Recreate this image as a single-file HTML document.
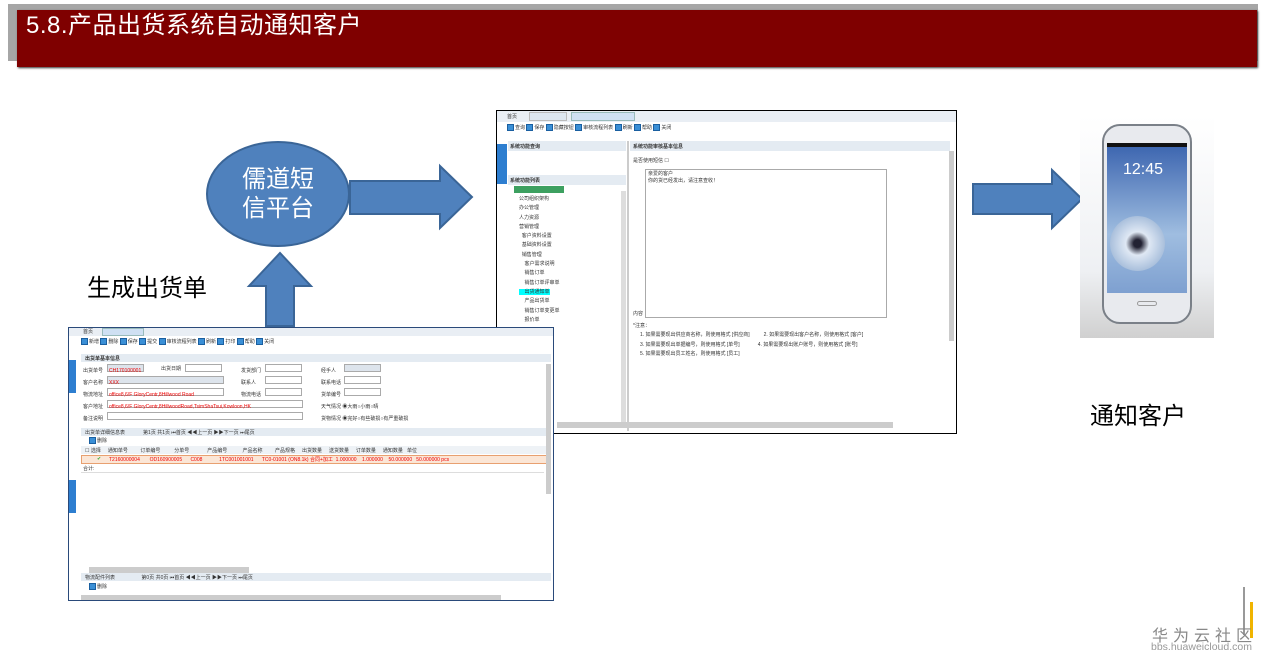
<!DOCTYPE html>
<html><head><meta charset="utf-8"><style>
*{margin:0;padding:0;box-sizing:border-box}
body{width:1273px;height:663px;background:#fff;position:relative;overflow:hidden;font-family:"Liberation Sans","Noto Sans CJK SC",sans-serif}
.a{position:absolute}
.t{font-size:5px;color:#333;white-space:nowrap}
.btn{display:inline-block;width:7px;height:7px;background:#3a8fd6;border:1px solid #1a5fa0;vertical-align:middle;margin-right:1px}
</style></head><body>
<div class="a" style="left:8px;top:4px;width:1250px;height:57px;background:#a6a6a6"></div>
<div class="a" style="left:17px;top:10px;width:1240px;height:57px;background:#7f0000;box-shadow:1px 1px 2px #333"></div>
<div class="a" style="left:26px;top:10px;color:#fff;font-size:24px;line-height:32px;letter-spacing:0.5px">5.8.产品出货系统自动通知客户</div>

<svg class="a" style="left:0;top:0" width="1273" height="663">
<ellipse cx="278" cy="194" rx="71" ry="52" fill="#4f81bd" stroke="#3a6597" stroke-width="2"/>
<polygon points="350,181 440,181 440,166 472,197 440,228 440,214 350,214" fill="#4f81bd" stroke="#3a6597" stroke-width="2"/>
<polygon points="973,184 1052,184 1052,170 1082,199 1052,228 1052,214 973,214" fill="#4f81bd" stroke="#3a6597" stroke-width="2"/>
<polygon points="266,326 266,286 249,286 280,253 311,286 294,286 294,326" fill="#4f81bd" stroke="#3a6597" stroke-width="2"/>
</svg>
<div class="a" style="left:207px;top:165px;width:142px;text-align:center;color:#fff;font-size:24px;line-height:29px">儒道短<br>信平台</div>
<div class="a" style="left:87px;top:268px;font-size:24px;color:#000">生成出货单</div>
<div class="a" style="left:1090px;top:396px;font-size:24px;color:#000">通知客户</div>

<div class="a" style="left:496px;top:110px;width:461px;height:324px;border:1px solid #000;background:#fff;overflow:hidden">
 <div class="a" style="left:0;top:0;width:459px;height:11px;background:#e9eef4"></div>
 <div class="a t" style="left:10px;top:2px">首页</div>
 <div class="a" style="left:32px;top:1px;width:38px;height:9px;background:#dde6ef;border:1px solid #bbb"></div>
 <div class="a" style="left:74px;top:1px;width:64px;height:9px;background:#cfe0f3;border:1px solid #9bb"></div>
 <div class="a t" style="left:10px;top:13px"><span class="btn"></span>查询 <span class="btn"></span>保存 <span class="btn"></span>隐藏按钮 <span class="btn"></span>审核流程列表 <span class="btn"></span>刷新 <span class="btn"></span>帮助 <span class="btn"></span>关闭</div>
 <div class="a" style="left:0;top:33px;width:10px;height:40px;background:#2d7ed0"></div>
 <div class="a" style="left:11px;top:30px;width:118px;height:10px;background:#e4ebf2"></div>
 <div class="a t" style="left:13px;top:32px;font-weight:bold">系统功能查询</div>
 <div class="a" style="left:11px;top:64px;width:118px;height:10px;background:#e4ebf2"></div>
 <div class="a t" style="left:13px;top:66px;font-weight:bold">系统功能列表</div>
 <div class="a" style="left:17px;top:75px;width:50px;height:7px;background:#3da060"></div>
 <div class="a t" style="left:22px;top:84px;line-height:9.3px">公司组织架构<br>办公管理<br>人力资源<br>营销管理<br>&nbsp;&nbsp;客户资料设置<br>&nbsp;&nbsp;基础资料设置<br>&nbsp;&nbsp;销售管理<br>&nbsp;&nbsp;&nbsp;&nbsp;客户需求说明<br>&nbsp;&nbsp;&nbsp;&nbsp;销售订单<br>&nbsp;&nbsp;&nbsp;&nbsp;销售订单评审单<br><span style="background:#0ff">&nbsp;&nbsp;&nbsp;&nbsp;出货通知单</span><br>&nbsp;&nbsp;&nbsp;&nbsp;产品出货单<br>&nbsp;&nbsp;&nbsp;&nbsp;销售订单变更单<br>&nbsp;&nbsp;&nbsp;&nbsp;报价单</div>
 <div class="a" style="left:124px;top:80px;width:5px;height:232px;background:#ddd"></div>
 <div class="a" style="left:130px;top:30px;width:2px;height:290px;background:#ccc"></div>
 <div class="a" style="left:133px;top:30px;width:320px;height:10px;background:#e4ebf2"></div>
 <div class="a t" style="left:136px;top:32px;font-weight:bold">系统功能审核基本信息</div>
 <div class="a t" style="left:136px;top:46px">是否使用短信 ☐</div>
 <div class="a" style="left:148px;top:58px;width:242px;height:149px;border:1px solid #aaa"></div>
 <div class="a t" style="left:151px;top:59px">亲爱的客户<br>你的货已经发出，请注意查收！</div>
 <div class="a t" style="left:136px;top:199px">内容</div>
 <div class="a t" style="left:136px;top:211px;line-height:9.3px">*注意：<br>&nbsp;&nbsp;&nbsp;&nbsp;&nbsp;1. 如果需要现出供应商名称，则使用格式 [供应商]&nbsp;&nbsp;&nbsp;&nbsp;&nbsp;&nbsp;&nbsp;&nbsp;&nbsp;&nbsp;2. 如果需要现出客户名称，则使用格式 [客户]<br>&nbsp;&nbsp;&nbsp;&nbsp;&nbsp;3. 如果需要现出单据编号，则使用格式 [单号]&nbsp;&nbsp;&nbsp;&nbsp;&nbsp;&nbsp;&nbsp;&nbsp;&nbsp;&nbsp;&nbsp;&nbsp;&nbsp;4. 如果需要现出账户账号，则使用格式 [账号]<br>&nbsp;&nbsp;&nbsp;&nbsp;&nbsp;5. 如果需要现出员工姓名，则使用格式 [员工]</div>
 <div class="a" style="left:452px;top:40px;width:5px;height:190px;background:#ccc"></div>
 <div class="a" style="left:60px;top:311px;width:336px;height:6px;background:#ccc"></div>
</div>

<div class="a" style="left:68px;top:327px;width:486px;height:274px;border:1px solid #2a4a7a;background:#fff;overflow:hidden">
 <div class="a" style="left:0;top:0;width:484px;height:8px;background:#e9eef4"></div>
 <div class="a t" style="left:14px;top:0px">首页</div>
 <div class="a" style="left:33px;top:0;width:42px;height:8px;background:#cfe0f3;border:1px solid #9bb"></div>
 <div class="a t" style="left:12px;top:10px"><span class="btn"></span>新增 <span class="btn"></span>删除 <span class="btn"></span>保存 <span class="btn"></span>提交 <span class="btn"></span>审核流程列表 <span class="btn"></span>刷新 <span class="btn"></span>打印 <span class="btn"></span>帮助 <span class="btn"></span>关闭</div>
 <div class="a" style="left:0;top:32px;width:7px;height:33px;background:#2d7ed0"></div>
 <div class="a" style="left:0;top:152px;width:7px;height:33px;background:#2d7ed0"></div>
 <div class="a" style="left:12px;top:26px;width:470px;height:8px;background:#e4ebf2"></div>
 <div class="a t" style="left:16px;top:27px;font-weight:bold">出货单基本信息</div>
 <div class="a t" style="left:14px;top:37px;line-height:12px">出货单号<br>客户名称<br>物流地址<br>客户地址<br>备注说明</div>
 <div class="a t" style="left:92px;top:37px">出货日期</div>
 <div class="a t" style="left:172px;top:37px;line-height:12px">发货部门<br>联系人<br>物流电话</div>
 <div class="a t" style="left:252px;top:37px;line-height:12px">经手人<br>联系电话<br>货单编号<br>天气情况 ◉大雨○小雨○晴<br>货物情况 ◉完好○有些破损○有严重破损</div>
 <div class="a" style="left:38px;top:36px;width:37px;height:8px;background:#dde4ec;border:1px solid #aaa"></div>
 <div class="a" style="left:116px;top:36px;width:37px;height:8px;border:1px solid #aaa"></div>
 <div class="a" style="left:196px;top:36px;width:37px;height:8px;border:1px solid #aaa"></div>
 <div class="a" style="left:275px;top:36px;width:37px;height:8px;background:#dde4ec;border:1px solid #aaa"></div>
 <div class="a" style="left:38px;top:48px;width:117px;height:8px;background:#dde4ec;border:1px solid #aaa"></div>
 <div class="a" style="left:196px;top:48px;width:37px;height:8px;border:1px solid #aaa"></div>
 <div class="a" style="left:275px;top:48px;width:37px;height:8px;border:1px solid #aaa"></div>
 <div class="a" style="left:38px;top:60px;width:117px;height:8px;border:1px solid #aaa"></div>
 <div class="a" style="left:196px;top:60px;width:37px;height:8px;border:1px solid #aaa"></div>
 <div class="a" style="left:275px;top:60px;width:37px;height:8px;border:1px solid #aaa"></div>
 <div class="a" style="left:38px;top:72px;width:196px;height:8px;border:1px solid #aaa"></div>
 <div class="a" style="left:38px;top:84px;width:196px;height:8px;border:1px solid #aaa"></div>
 <div class="a t" style="left:40px;top:37px;color:#e00;line-height:12px">CH170100001<br>XXX<br>office8,6/F GloryCentr,8Hillwood Road<br>office8,6/F GloryCentr,8HillwoodRoad,TsimShaTsui,Kowloon,HK</div>
 <div class="a" style="left:12px;top:100px;width:470px;height:8px;background:#e4ebf2"></div>
 <div class="a t" style="left:16px;top:101px">出货单详细信息表&nbsp;&nbsp;&nbsp;&nbsp;&nbsp;&nbsp;&nbsp;&nbsp;&nbsp;&nbsp;&nbsp;&nbsp;&nbsp;第1页 共1页 ⏮首页 ◀◀上一页 ▶▶下一页 ⏭尾页</div>
 <div class="a t" style="left:20px;top:109px"><span class="btn"></span>删除</div>
 <div class="a" style="left:12px;top:118px;width:470px;height:8px;background:#eef2f6"></div>
 <div class="a t" style="left:16px;top:119px">☐ 选择&nbsp;&nbsp;&nbsp;&nbsp;&nbsp;通知单号&nbsp;&nbsp;&nbsp;&nbsp;&nbsp;&nbsp;&nbsp;&nbsp;&nbsp;订单编号&nbsp;&nbsp;&nbsp;&nbsp;&nbsp;&nbsp;&nbsp;&nbsp;&nbsp;&nbsp;分单号&nbsp;&nbsp;&nbsp;&nbsp;&nbsp;&nbsp;&nbsp;&nbsp;&nbsp;&nbsp;&nbsp;&nbsp;&nbsp;产品编号&nbsp;&nbsp;&nbsp;&nbsp;&nbsp;&nbsp;&nbsp;&nbsp;&nbsp;&nbsp;&nbsp;产品名称&nbsp;&nbsp;&nbsp;&nbsp;&nbsp;&nbsp;&nbsp;&nbsp;&nbsp;产品规格&nbsp;&nbsp;&nbsp;&nbsp;&nbsp;出货数量&nbsp;&nbsp;&nbsp;&nbsp;&nbsp;送货数量&nbsp;&nbsp;&nbsp;&nbsp;&nbsp;订单数量&nbsp;&nbsp;&nbsp;&nbsp;&nbsp;通知数量&nbsp;&nbsp;&nbsp;单位</div>
 <div class="a" style="left:12px;top:127px;width:470px;height:9px;background:#fbe6d6;border:1px solid #e8a070"></div>
 <div class="a t" style="left:28px;top:128px;color:#3a3">✔</div>
 <div class="a t" style="left:40px;top:128px;color:#e00">T2160000004 &nbsp;&nbsp;&nbsp;&nbsp;&nbsp;&nbsp;OD160900005 &nbsp;&nbsp;&nbsp;&nbsp;&nbsp;C008 &nbsp;&nbsp;&nbsp;&nbsp;&nbsp;&nbsp;&nbsp;&nbsp;&nbsp;&nbsp;&nbsp;1TC001001001 &nbsp;&nbsp;&nbsp;&nbsp;&nbsp;TC0-01001 (ON8.1k) 合同+加工 &nbsp;1.000000 &nbsp;&nbsp;&nbsp;1.000000 &nbsp;&nbsp;&nbsp;50.000000 &nbsp;&nbsp;50.000000 pcs</div>
 <div class="a t" style="left:14px;top:137px">合计:</div>
 <div class="a" style="left:12px;top:144px;width:463px;height:95px;border-top:1px solid #ddd"></div>
 <div class="a" style="left:20px;top:239px;width:160px;height:6px;background:#ccc"></div>
 <div class="a" style="left:12px;top:245px;width:470px;height:8px;background:#e4ebf2"></div>
 <div class="a t" style="left:16px;top:246px">物流配件列表&nbsp;&nbsp;&nbsp;&nbsp;&nbsp;&nbsp;&nbsp;&nbsp;&nbsp;&nbsp;&nbsp;&nbsp;&nbsp;&nbsp;&nbsp;&nbsp;&nbsp;&nbsp;&nbsp;第0页 共0页 ⏮首页 ◀◀上一页 ▶▶下一页 ⏭尾页</div>
 <div class="a t" style="left:20px;top:255px"><span class="btn"></span>删除</div>
 <div class="a" style="left:477px;top:36px;width:5px;height:130px;background:#ccc"></div>
 <div class="a" style="left:12px;top:267px;width:420px;height:5px;background:#ccc"></div>
</div>

<div class="a" style="left:1080px;top:116px;width:134px;height:222px;background:linear-gradient(#fff,#eef0f3 70%,#d0d0d0)">
 <div class="a" style="left:22px;top:8px;width:90px;height:200px;border-radius:18px;background:#e8eaee;border:2px solid #7a8088"></div>
 <div class="a" style="left:27px;top:30px;width:80px;height:147px;background:linear-gradient(#3d66b0,#9fbde0 60%,#7ea0d0)"></div>
 <div class="a" style="left:27px;top:27px;width:80px;height:4px;background:#111"></div>
 <div class="a" style="left:43px;top:45px;color:#fff;font-size:16px">12:45</div>
 <div class="a" style="left:30px;top:100px;width:55px;height:55px;border-radius:50%;background:radial-gradient(#223 10%,#dfe8f4 30%,#aac0dc 70%,transparent 72%)"></div>
 <div class="a" style="left:57px;top:185px;width:20px;height:5px;border:1px solid #999;border-radius:3px"></div>
</div>

<div class="a" style="left:1243px;top:587px;width:2px;height:48px;background:#999"></div>
<div class="a" style="left:1250px;top:602px;width:3px;height:36px;background:#f0b400"></div>
<div class="a" style="left:1152px;top:622px;font-size:16px;color:#888;letter-spacing:5px">华为云社区</div>
<div class="a" style="left:1151px;top:641px;font-size:10.5px;color:#999">bbs.huaweicloud.com</div>
</body></html>
